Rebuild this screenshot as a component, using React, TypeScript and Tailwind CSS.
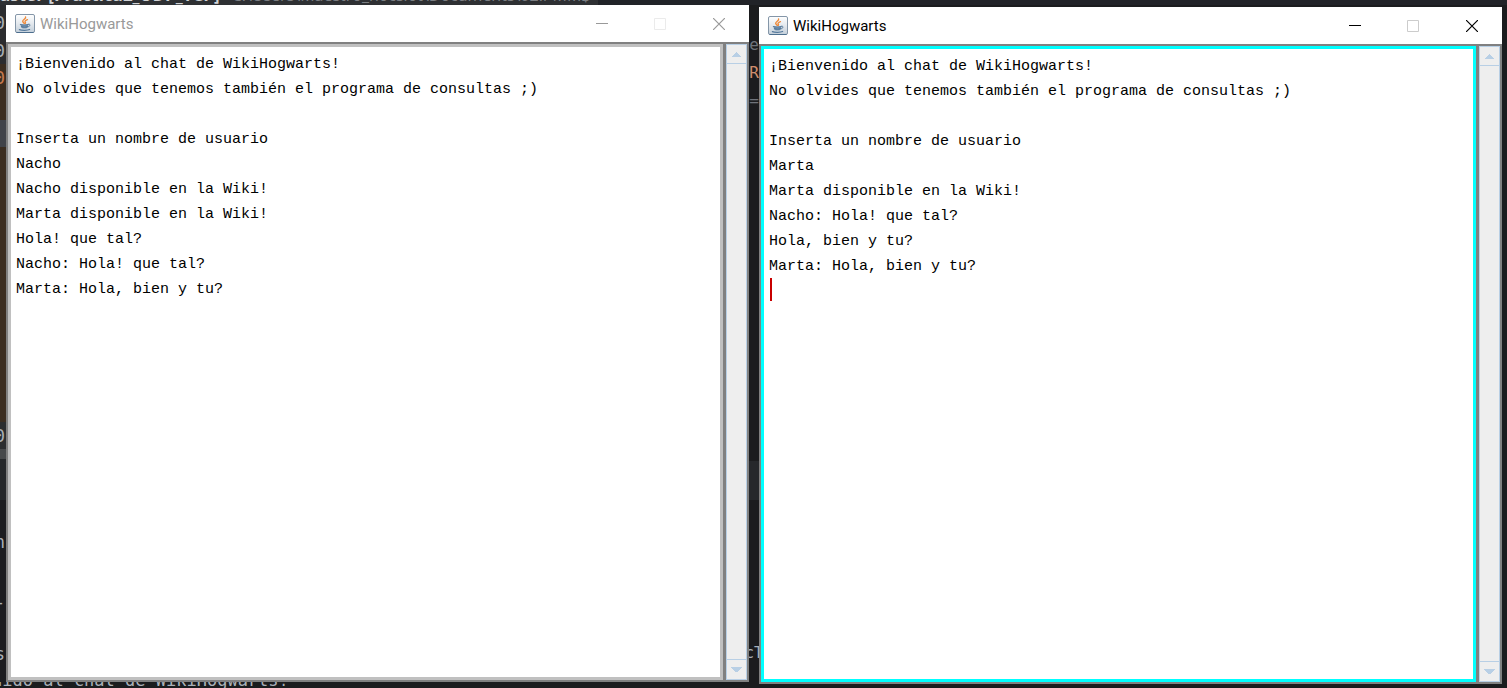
import React from 'react';

type ChatWindowProps = {
  id: string;
  active: boolean;
  lines: string[];
};

const GREETING = [
  '¡Bienvenido al chat de WikiHogwarts!',
  'No olvides que tenemos también el programa de consultas ;)',
  '',
  'Inserta un nombre de usuario',
];

const NACHO = [
  ...GREETING,
  'Nacho',
  'Nacho disponible en la Wiki!',
  'Marta disponible en la Wiki!',
  'Hola! que tal?',
  'Nacho: Hola! que tal?',
  'Marta: Hola, bien y tu?',
];

const MARTA = [
  ...GREETING,
  'Marta',
  'Marta disponible en la Wiki!',
  'Nacho: Hola! que tal?',
  'Hola, bien y tu?',
  'Marta: Hola, bien y tu?',
  '',
];

function JavaIcon({ id }: { id: string }) {
  return (
    <svg width="20" height="20" viewBox="0 0 20 20" aria-hidden="true">
      <defs>
        <linearGradient id={id} x1="0" y1="0" x2="0" y2="1">
          <stop offset="0" stopColor="#ffffff" />
          <stop offset="0.5" stopColor="#e4e9ee" />
          <stop offset="1" stopColor="#c3cfda" />
        </linearGradient>
      </defs>
      <rect x="0.5" y="0.5" width="19" height="18" rx="1.5" fill={`url(#${id})`} stroke="#8496a8" />
      <path d="M1.5 18.5h17" stroke="#4c6e8e" />
      <path d="M10.6 3c0.8 1.8-3.1 2.6-2.9 4.4 0.1 0.9 1.2 1.2 1.4 2M12.4 5.6c-1.5 0.6-2.6 1.3-2.3 2.2 0.3 0.7 0.7 1 0.1 1.7" fill="none" stroke="#ee8a3a" strokeWidth="1.4" strokeLinecap="round" />
      <path d="M6 10.8h7v1.2c0 1.6-1 2.4-2 2.4H8c-1 0-2-0.8-2-2.4z" fill="#7f9bb5" />
      <path d="M5.4 10.6c1.5 0.5 6.4 0.5 7.8 0M6.4 12.6c1.6 0.5 4.8 0.5 6.2 0M4.4 15.6c2.2 1 8.2 0.9 10.2-0.1" fill="none" stroke="#55799b" strokeWidth="1.2" strokeLinecap="round" />
      <path d="M13.2 10.2c2.2-0.5 2.5 1.8 0 2.6" fill="none" stroke="#55799b" />
    </svg>
  );
}

function ScrollBar() {
  return (
    <div className="flex w-[21px] shrink-0 flex-col justify-between border border-[#b8cfe5] bg-[#eeeeee]">
      <button aria-label="Subir" className="flex h-[19px] items-center justify-center border-b border-[#b8cfe5]">
        <svg width="11" height="5" viewBox="0 0 11 5" fill="#b8cfe5" shapeRendering="crispEdges">
          <path d="M5 0h1v1h1v1h1v1h1v1h1v1H1V4h1V3h1V2h1V1h1z" />
        </svg>
      </button>
      <button aria-label="Bajar" className="flex h-5 items-center justify-center border-t border-[#b8cfe5]">
        <svg width="11" height="5" viewBox="0 0 11 5" fill="#b8cfe5" shapeRendering="crispEdges">
          <path d="M0 0h11v1h-1v1H9v1H8v1H7v1H4V4H3V3H2V2H1V1H0z" />
        </svg>
      </button>
    </div>
  );
}

function ChatWindow({ id, active, lines }: ChatWindowProps) {
  return (
    <section className="flex min-w-0 flex-1 flex-col bg-[#808080]">
      <header className={`flex h-[37px] shrink-0 items-center justify-between bg-white pl-[9px] ${active ? 'text-black' : 'text-[#999999]'}`}>
        <div className="flex items-center gap-[5px]">
          <JavaIcon id={`${id}-icon`} />
          <h1 className="font-['Roboto',sans-serif] text-[15px] leading-5">WikiHogwarts</h1>
        </div>
        <div className="flex h-full">
          <button aria-label="Minimizar" className="flex w-[58px] items-center justify-center">
            <svg width="12" height="12" viewBox="0 0 12 12" stroke="currentColor"><path d="M0 5.5h12" /></svg>
          </button>
          <button aria-label="Maximizar" disabled className={`flex w-[58px] items-center justify-center ${active ? 'text-[#cccccc]' : 'text-[#ebebeb]'}`}>
            <svg width="12" height="12" viewBox="0 0 12 12" fill="none" stroke="currentColor"><path d="M0.5 0.5h11v11h-11z" /></svg>
          </button>
          <button aria-label="Cerrar" className="flex w-[60px] items-center justify-center">
            <svg width="12" height="12" viewBox="0 0 12 12" stroke="currentColor" strokeWidth="1.2"><path d="M0 0L12 12M12 0L0 12" /></svg>
          </button>
        </div>
      </header>
      <div className="flex min-h-0 flex-1 gap-[3px] p-[2px]">
        <div className="relative flex min-w-0 flex-1">
          <textarea
            aria-label="Chat"
            readOnly
            spellCheck={false}
            value={lines.join('\n')}
            className={`min-w-0 flex-1 resize-none overflow-hidden border-[3px] bg-white px-[5px] py-[5px] font-['Liberation_Mono','Courier_New',monospace] text-[15px] leading-[25px] text-black outline-none ${active ? 'border-[#00ffff]' : 'border-[#c0c0c0]'}`}
          />
          {active && <span aria-hidden="true" className="absolute left-[9px] top-[232px] h-[23px] w-[2px] bg-[#c80000]" />}
        </div>
        <ScrollBar />
      </div>
    </section>
  );
}

function LeftGutter() {
  return (
    <div className="flex w-[6px] shrink-0 flex-col overflow-hidden">
      <div className="flex h-[59px] shrink-0 flex-col items-end bg-[#2b2c2f] pr-px pt-1 leading-7">
        <span>0</span>
        <span>0</span>
      </div>
      <div className="flex h-14 shrink-0 flex-col items-end bg-[#3b2d20] pr-px leading-7 text-[#c77b50]">
        <span>0</span>
      </div>
      <div className="h-[27px] shrink-0 bg-[#414349]" />
      <div className="h-[275px] shrink-0 bg-[#3b2d20]" />
      <div className="flex h-[27px] shrink-0 flex-col items-end bg-[#2b2d2f] pr-px leading-7">
        <span>0</span>
      </div>
      <div className="h-[10px] shrink-0 bg-[#47494b]" />
      <div className="h-[41px] shrink-0 bg-[#26282b]" />
      <div className="flex flex-1 flex-col items-end bg-[#1c1d21] pr-px pt-7 leading-7">
        <span>n</span>
        <span className="pt-8">-</span>
        <span className="pt-6">s</span>
      </div>
    </div>
  );
}

function MiddleGutter() {
  return (
    <div className="flex w-[10px] shrink-0 flex-col overflow-hidden">
      <div className="flex h-[455px] shrink-0 flex-col items-center pt-[26px] text-[16px] leading-7 text-[#6f737a]">
        <span>e</span>
        <span className="text-[#cf8e6d]">R</span>
        <span>=</span>
      </div>
      <div className="h-10 shrink-0 border-t border-[#1b1c1e] bg-[#26282b]" />
      <div className="flex flex-1 flex-col items-center pt-[139px] text-[15px] leading-7">
        <span>cT</span>
      </div>
    </div>
  );
}

function Desktop() {
  return (
    <div aria-hidden="true" className="absolute inset-0 flex flex-col overflow-hidden bg-[#1b1c1e] font-['DejaVu_Sans_Mono',monospace] text-[17px] text-[#a9b0b8]">
      <div className="flex h-[5px] shrink-0 items-end overflow-hidden bg-[#212328] font-['Open_Sans',sans-serif] leading-5">
        <div className="flex w-[598px] items-end gap-3 whitespace-pre bg-[#2e3033]">
          <span className="font-bold text-[#d2d4d6]">aster [Practica2_UDP_TCP]</span>
          <span className="text-[16px] text-[#7b7e82]">C:\Users\Maestro_nocslot\Documents\02.PMM$</span>
        </div>
      </div>
      <div className="flex min-h-0 flex-1">
        <LeftGutter />
        <div className="flex-1" />
        <MiddleGutter />
        <div className="flex-1" />
        <div className="w-[5px] shrink-0" />
      </div>
      <div className="flex h-[6px] shrink-0 items-end overflow-hidden">
        <p className="-ml-2 whitespace-pre leading-4">nido al chat de WikiHogwarts!</p>
      </div>
    </div>
  );
}

export default function App() {
  return (
    <div className="relative h-screen min-h-[400px] overflow-hidden">
      <Desktop />
      <main className="relative flex h-full gap-[10px] pl-[6px] pr-[5px]">
        <div className="flex min-w-0 flex-1 pb-[6px] pt-[5px]">
          <ChatWindow id="nacho" active={false} lines={NACHO} />
        </div>
        <div className="flex min-w-0 flex-1 pb-1 pt-[7px]">
          <ChatWindow id="marta" active lines={MARTA} />
        </div>
      </main>
    </div>
  );
}
